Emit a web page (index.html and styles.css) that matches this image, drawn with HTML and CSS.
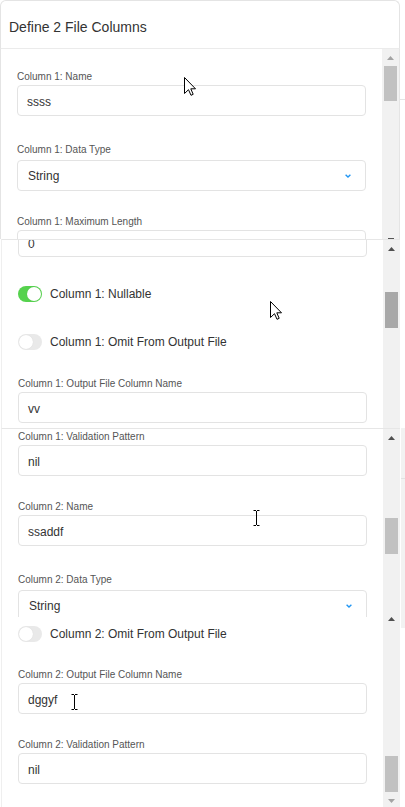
FILE: index.html
```html
<!DOCTYPE html>
<html lang="en">
<head>
<meta charset="utf-8">
<title>Define 2 File Columns</title>
<link rel="stylesheet" href="styles.css">
</head>
<body>
<div class="page">
  <div class="strip">
    <header class="card-head"><h1 class="title">Define 2 File Columns</h1></header>
    <div class="side"></div>
  </div>

  <div class="strip">
    <section class="pane pane-1">
      <div class="view">
        <div class="content content-1">
          <div class="field">
            <span class="label">Column 1: Name</span>
            <div class="input">ssss</div>
          </div>
          <div class="field field-select mt-28">
            <span class="label">Column 1: Data Type</span>
            <div class="select"><span>String</span><svg class="chev" viewBox="0 0 6 4"><polyline points="0.6,0.8 3,3 5.4,0.8"/></svg></div>
          </div>
          <div class="field mt-25">
            <span class="label">Column 1: Maximum Length</span>
            <div class="input"></div>
          </div>
        </div>
      </div>
      <div class="sbar">
        <div class="sb-btn"><svg class="arr dim" viewBox="0 0 7 4"><polygon points="0,4 3.5,0 7,4"/></svg></div>
        <div class="sb-track"><div class="thumb thumb-1"></div></div>
        <div class="sb-dash"></div>
      </div>
    </section>
    <div class="side"><div class="tick"></div></div>
  </div>

  <div class="strip">
    <section class="pane pane-2">
      <div class="view">
        <div class="content">
          <div class="input pull-up">0</div>
          <div class="toggle-row mt-29"><span class="toggle on"><span class="knob"></span></span><span>Column 1: Nullable</span></div>
          <div class="toggle-row mt-32"><span class="toggle"><span class="knob"></span></span><span>Column 1: Omit From Output File</span></div>
          <div class="field mt-28">
            <span class="label">Column 1: Output File Column Name</span>
            <div class="input">vv</div>
          </div>
        </div>
      </div>
      <div class="sbar">
        <div class="sb-btn"><svg class="arr" viewBox="0 0 7 4"><polygon points="0,4 3.5,0 7,4"/></svg></div>
        <div class="sb-track"><div class="thumb thumb-2 hover"></div></div>
      </div>
    </section>
    <div class="side"></div>
  </div>

  <div class="strip">
    <section class="pane pane-3">
      <div class="view">
        <div class="content content-3">
          <div class="field">
            <span class="label">Column 1: Validation Pattern</span>
            <div class="input">nil</div>
          </div>
          <div class="field mt-25">
            <span class="label">Column 2: Name</span>
            <div class="input">ssaddf</div>
          </div>
          <div class="field field-select mt-28">
            <span class="label">Column 2: Data Type</span>
            <div class="select"><span>String</span><svg class="chev" viewBox="0 0 6 4"><polyline points="0.6,0.8 3,3 5.4,0.8"/></svg></div>
          </div>
        </div>
      </div>
      <div class="sbar">
        <div class="sb-btn"><svg class="arr" viewBox="0 0 7 4"><polygon points="0,4 3.5,0 7,4"/></svg></div>
        <div class="sb-track"><div class="thumb thumb-3"></div></div>
      </div>
    </section>
    <div class="side side-grey"><div class="tick tick-3"></div></div>
  </div>

  <div class="strip">
    <section class="pane pane-4">
      <div class="view">
        <div class="content content-4">
          <div class="toggle-row"><span class="toggle"><span class="knob"></span></span><span>Column 2: Omit From Output File</span></div>
          <div class="field mt-27">
            <span class="label">Column 2: Output File Column Name</span>
            <div class="input">dggyf</div>
          </div>
          <div class="field mt-25">
            <span class="label">Column 2: Validation Pattern</span>
            <div class="input">nil</div>
          </div>
        </div>
      </div>
      <div class="sbar">
        <div class="sb-btn cut"><svg class="arr" viewBox="0 0 7 4"><polygon points="0,4 3.5,0 7,4"/></svg></div>
        <div class="sb-track"><div class="thumb thumb-4"></div></div>
        <div class="sb-btn"><svg class="arr dim" viewBox="0 0 7 4"><polygon points="0,0 7,0 3.5,4"/></svg></div>
      </div>
    </section>
    <div class="side"><div class="grey-top"></div></div>
  </div>

  <svg class="cursor cursor-1" viewBox="0 0 12 19"><path d="M0.5 0.5 V16.5 L4.5 12.7 L7 18.3 L9.2 17.3 L6.8 11.8 L11.5 11.8 Z"/></svg>
  <svg class="cursor cursor-2" viewBox="0 0 12 19"><path d="M0.5 0.5 V16.5 L4.5 12.7 L7 18.3 L9.2 17.3 L6.8 11.8 L11.5 11.8 Z"/></svg>
  <svg class="ibeam ibeam-1" viewBox="0 0 7 16"><path d="M0.5 0.5 H3 M4 0.5 H6.5 M3.5 1 V15 M0.5 15.5 H3 M4 15.5 H6.5"/></svg>
  <svg class="ibeam ibeam-2" viewBox="0 0 7 16"><path d="M0.5 0.5 H3 M4 0.5 H6.5 M3.5 1 V15 M0.5 15.5 H3 M4 15.5 H6.5"/></svg>
</div>
</body>
</html>
```

FILE: styles.css
```css
html, body {
  margin: 0;
  padding: 0;
  background: #fff;
}

body {
  font-family: "Liberation Sans", Arial, sans-serif;
  color: #333;
}

.page {
  position: relative;
  width: 405px;
  height: 807px;
  overflow: hidden;
  display: flex;
  flex-direction: column;
}

.strip {
  display: flex;
  flex: none;
}

.side {
  flex: 1;
}

.tick {
  margin-top: 50px;
  height: 1px;
  background: #e4e4e4;
}

.side-grey {
  background: #f2f2f2;
  border-left: 1px solid #fff;
}

.tick-3 {
  margin-top: 50px;
  background: #e2e2e2;
}

.grey-top {
  height: 11px;
  margin-left: 1px;
  background: #f2f2f2;
}

/* header */
.card-head {
  width: 400px;
  height: 49px;
  box-sizing: border-box;
  border: 1px solid #e4e4e4;
  border-bottom-color: #ebebeb;
  border-radius: 6px 6px 0 0;
  padding: 18px 8px 0;
  flex: none;
}

.title {
  margin: 0;
  font-size: 14px;
  font-weight: normal;
  line-height: 16px;
  color: #333;
}

/* panes */
.pane {
  display: flex;
  box-sizing: border-box;
  overflow: hidden;
  flex: none;
}

.pane-1 {
  width: 400px;
  height: 190px;
  border-left: 1px solid #e4e4e4;
  border-right: 1px solid #e4e4e4;
}

.pane-2,
.pane-3,
.pane-4 {
  margin-left: 1px;
  width: 399px;
  border-left: 1px solid #efefef;
}

.pane-2,
.pane-3 {
  height: 189px;
  border-top: 1px solid #e6e6e6;
}

.pane-4 {
  height: 190px;
}

.view {
  flex: 1;
  overflow: hidden;
  background: #fff;
}

.content {
  padding: 0 16px;
}

.content-1 { padding-top: 22px; }
.content-3 { padding-top: 2px; }
.content-4 { padding-top: 9px; }

.mt-25 { margin-top: 25px; }
.mt-27 { margin-top: 27px; }
.mt-28 { margin-top: 28px; }
.mt-29 { margin-top: 29px; }
.mt-32 { margin-top: 32px; }

/* fields */
.label {
  display: block;
  font-size: 10px;
  line-height: 12px;
  color: #555;
  margin-bottom: 2px;
}

.field-select .label {
  margin-bottom: 4px;
}

.input,
.select {
  box-sizing: border-box;
  height: 31px;
  border: 1px solid #e3e3e3;
  border-radius: 4px;
  background: #fff;
  font-size: 12px;
  color: #333;
  display: flex;
  align-items: center;
}

.input {
  padding: 2px 9px 0;
}

.input.pull-up {
  margin-top: -12px;
  height: 29px;
  padding-top: 4px;
  line-height: 9px;
}

.select {
  padding: 0 14px 0 10px;
  justify-content: space-between;
}

.chev {
  width: 6px;
  height: 4px;
  fill: none;
  stroke: #2196f3;
  stroke-width: 1.4;
}

/* toggles */
.toggle-row {
  display: flex;
  align-items: center;
  gap: 8px;
  height: 16px;
  font-size: 12px;
  color: #333;
}

.toggle {
  width: 24px;
  height: 16px;
  box-sizing: border-box;
  padding: 1px;
  border-radius: 8px;
  background: #e9e9e9;
  display: flex;
  align-items: center;
  flex: none;
}

.toggle.on {
  background: #56d24e;
  justify-content: flex-end;
}

.knob {
  width: 14px;
  height: 14px;
  border-radius: 50%;
  background: #fff;
  box-shadow: 0 0 1px rgba(0, 0, 0, 0.12);
}

/* scrollbars */
.sbar {
  width: 17px;
  flex: none;
  background: #f1f1f1;
  display: flex;
  flex-direction: column;
}

.sb-btn {
  height: 17px;
  flex: none;
  display: flex;
  align-items: center;
  justify-content: center;
}

.sb-btn.cut {
  margin-top: -7px;
}

.arr {
  width: 7px;
  height: 4px;
  fill: #505050;
}

.arr.dim {
  fill: #a3a3a3;
}

.sb-track {
  flex: 1;
}

.thumb {
  width: 13px;
  height: 36px;
  margin: 0 2px;
  background: #c1c1c1;
}

.thumb.hover {
  background: #a8a8a8;
}

.thumb-1 { height: 35px; }
.thumb-2 { margin-top: 35px; }
.thumb-3 { margin-top: 72px; }
.thumb-4 { margin-top: 129px; }

.sb-dash {
  width: 6px;
  height: 1px;
  margin: 0 auto;
  background: #555;
  flex: none;
}

/* mouse cursors overlaid on the capture */
.cursor {
  position: absolute;
  width: 12px;
  height: 19px;
  fill: #fff;
  stroke: #000;
  stroke-width: 1;
  stroke-linejoin: round;
}

.cursor-1 { left: 184px; top: 77px; }
.cursor-2 { left: 270px; top: 301px; }

.ibeam {
  position: absolute;
  width: 7px;
  height: 16px;
  fill: none;
  stroke: #000;
  stroke-width: 1;
}

.ibeam-1 { left: 253px; top: 510px; }
.ibeam-2 { left: 71px; top: 694px; }
```
